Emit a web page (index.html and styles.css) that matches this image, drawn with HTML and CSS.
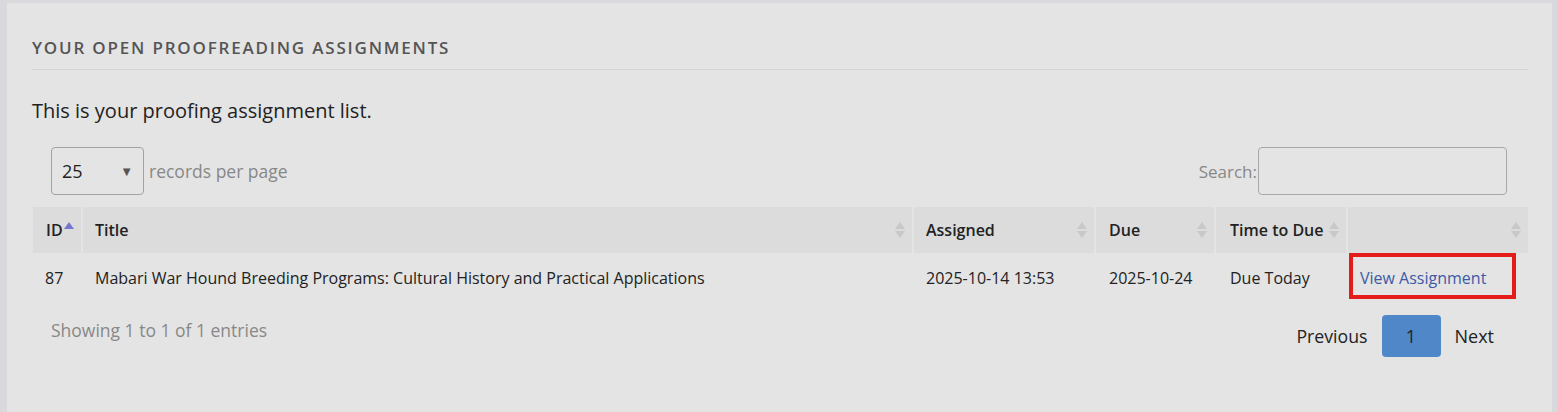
FILE: index.html
```html
<!DOCTYPE html>
<html lang="en">
<head>
    <meta charset="UTF-8">
    <meta name="viewport" content="width=device-width, initial-scale=1.0">
    <title>Proofreading Assignments</title>
    <link rel="stylesheet" href="styles.css">
</head>
<body>
    <div class="panel">
        <h2 class="panel-title">Your Open Proofreading Assignments</h2>
        <p class="intro">This is your proofing assignment list.</p>

        <div class="table-tools">
            <div class="length">
                <div class="select-box">
                    <span>25</span>
                    <span class="caret">&#9660;</span>
                </div>
                <span class="muted records">records per page</span>
            </div>
            <label class="search">
                <span class="muted">Search:</span>
                <input type="text">
            </label>
        </div>

        <table class="list">
            <thead>
                <tr>
                    <th class="col-id">ID<span class="sort-up"></span></th>
                    <th class="col-title">Title<span class="sort"></span></th>
                    <th class="col-assigned">Assigned<span class="sort"></span></th>
                    <th class="col-due">Due<span class="sort"></span></th>
                    <th class="col-time">Time to Due<span class="sort"></span></th>
                    <th class="col-action"><span class="sort"></span></th>
                </tr>
            </thead>
            <tbody>
                <tr>
                    <td>87</td>
                    <td>Mabari War Hound Breeding Programs: Cultural History and Practical Applications</td>
                    <td>2025-10-14 13:53</td>
                    <td class="cell-due">2025-10-24</td>
                    <td class="cell-time">Due Today</td>
                    <td class="action">
                        <a href="#">View Assignment</a>
                        <span class="highlight"></span>
                    </td>
                </tr>
            </tbody>
        </table>

        <div class="table-foot">
            <span class="muted info">Showing 1 to 1 of 1 entries</span>
            <div class="pager">
                <a href="#" class="page-btn">Previous</a>
                <a href="#" class="page-btn current">1</a>
                <a href="#" class="page-btn">Next</a>
            </div>
        </div>
    </div>
</body>
</html>
```

FILE: styles.css
```css
body {
    font-family: "Open Sans", Arial, sans-serif;
    margin: 0;
    padding: 3px 5px 0 7px;
    background-color: #d9d9dd;
    color: #222;
}
.panel {
    background-color: #e4e4e4;
    padding: 34px 24px 60px 25px;
    min-height: 300px;
}
.panel-title {
    margin: 0;
    padding-bottom: 10px;
    border-bottom: 1px solid #d4d4d4;
    font-size: 17px;
    line-height: 22px;
    font-weight: 600;
    letter-spacing: 1.8px;
    text-transform: uppercase;
    color: #555;
}
.intro {
    margin: 28px 0 0;
    font-size: 20px;
    line-height: 26px;
}
.muted {
    color: #888;
}
.table-tools {
    display: flex;
    justify-content: space-between;
    align-items: center;
    margin-top: 23px;
    padding: 0 21px 0 19px;
    font-size: 17px;
}
.length {
    display: flex;
    align-items: center;
    gap: 5px;
}
.records {
    font-size: 17.5px;
}
.select-box {
    width: 71px;
    height: 46px;
    border: 1px solid #a2a2a2;
    border-radius: 4px;
    display: flex;
    align-items: center;
    justify-content: space-between;
    padding: 0 10px;
    font-size: 18px;
    color: #222;
}
.caret {
    font-size: 13px;
    color: #555;
}
.search {
    display: flex;
    align-items: center;
}
.search input {
    width: 247px;
    height: 46px;
    border: 1px solid #a8a8a8;
    border-radius: 4px;
    background-color: #e4e4e4;
    margin: 0 0 0 1px;
    padding: 0;
}
.list {
    width: calc(100% + 3px);
    margin: 12px 0 0 -1px;
    table-layout: fixed;
    border-collapse: separate;
    border-spacing: 2px 0;
    font-size: 16px;
}
.list th, .list td {
    box-sizing: border-box;
}
.list th {
    position: relative;
    height: 46px;
    padding: 0 12px;
    text-align: left;
    font-weight: 600;
    background-color: #dcdcdc;
}
.list td {
    height: 50px;
    padding: 0 12px;
    white-space: nowrap;
}
.col-id { width: 48px; padding-left: 13px !important; }
.col-title { width: 829px; }
.col-assigned { width: 180px; }
.col-due { width: 118px; padding-left: 13px !important; }
.col-time { width: 130px; padding-left: 14px !important; }
.list .cell-due { padding-left: 13px; }
.list .cell-time { padding-left: 14px; }
.sort {
    position: absolute;
    right: 7px;
    top: 15px;
    width: 10px;
    height: 16px;
}
.sort::before, .sort::after, .sort-up::before {
    content: "";
    position: absolute;
    left: 0;
    border-left: 5px solid transparent;
    border-right: 5px solid transparent;
}
.sort::before {
    top: 0;
    border-bottom: 7px solid #c8c8c8;
}
.sort::after {
    bottom: 0;
    border-top: 7px solid #c8c8c8;
}
.sort-up {
    position: absolute;
    left: 31px;
    top: 15px;
    width: 10px;
    height: 8px;
}
.sort-up::before {
    top: 0;
    border-bottom: 7px solid #7676d0;
}
.action {
    position: relative;
}
.action a {
    color: #3d5aa6;
    text-decoration: none;
}
.highlight {
    position: absolute;
    left: 1px;
    top: 0;
    width: 159px;
    height: 38px;
    border: 4px solid #e41c1c;
}
.table-foot {
    display: flex;
    justify-content: space-between;
    align-items: flex-start;
    margin-top: 12px;
    padding: 0 20px 0 19px;
}
.info {
    font-size: 17.5px;
    line-height: 24px;
    padding-top: 3px;
}
.pager {
    display: flex;
    align-items: center;
}
.page-btn {
    display: block;
    height: 42px;
    line-height: 42px;
    padding: 0 14px;
    font-size: 18px;
    color: #222;
    text-decoration: none;
    border-radius: 4px;
}
.page-btn:first-child {
    font-size: 17.7px;
}
.page-btn.current {
    width: 59px;
    padding: 0;
    text-align: center;
    background-color: #4f87c9;
}
```
